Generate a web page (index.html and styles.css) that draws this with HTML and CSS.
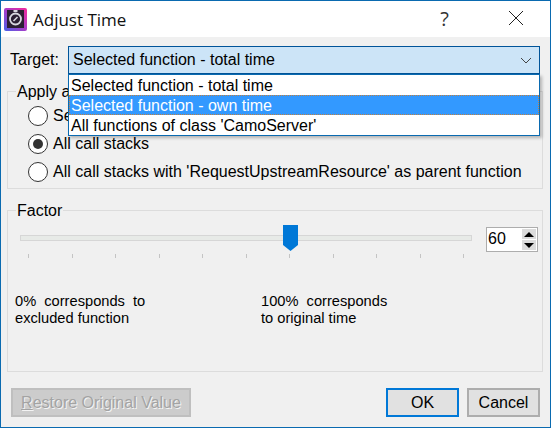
FILE: index.html
```html
<!DOCTYPE html>
<html lang="en">
<head>
<meta charset="UTF-8" />
<title>Adjust Time</title>
<meta name="viewport" content="width=device-width, initial-scale=1" />
<link rel="stylesheet" href="styles.css">
</head>
<body>

<div class="window">
  <div class="titlebar">
    <svg class="app-icon" width="23" height="24" viewBox="0 0 23 24">
      <defs>
        <linearGradient id="iconBg" x1="0" y1="1" x2="1" y2="0">
          <stop offset="0" stop-color="#4a62e8" />
          <stop offset="0.5" stop-color="#a83cc8" />
          <stop offset="1" stop-color="#f4289a" />
        </linearGradient>
      </defs>
      <rect x="0" y="1" width="23" height="23" rx="2" fill="url(#iconBg)" />
      <rect x="3" y="3" width="17" height="18" fill="#2a1f33" />
      <rect x="9.5" y="3" width="4" height="2" fill="#d8d8e0" />
      <circle cx="11.5" cy="12" r="5.5" fill="none" stroke="#d8d8e0" stroke-width="1.8" />
      <path d="M9.5 14 L13.5 10" stroke="#d8d8e0" stroke-width="1.6" />
    </svg>
    <span class="title">Adjust Time</span>
    <span class="help">?</span>
    <svg class="close" width="16" height="16" viewBox="0 0 16 16">
      <path d="M1 1 L15 15 M15 1 L1 15" stroke="#222" stroke-width="1" fill="none" />
    </svg>
  </div>

  <div class="content">
    <div class="target-row">
      <label class="target-label">Target:</label>
      <div class="combo-wrap">
        <div class="combo">
          <span>Selected function - total time</span>
          <svg width="12" height="7" viewBox="0 0 12 7">
            <path d="M1 1 L6 6 L11 1" stroke="#444" stroke-width="1" fill="none" />
          </svg>
        </div>
        <ul class="combo-list">
          <li>Selected function - total time</li>
          <li class="selected">Selected function - own time</li>
          <li>All functions of class 'CamoServer'</li>
        </ul>
      </div>
    </div>

    <fieldset class="group group-apply">
      <legend>Apply a</legend>
      <div class="radio-row"><span class="radio"></span>Se</div>
      <div class="radio-row"><span class="radio checked"></span>All call stacks</div>
      <div class="radio-row"><span class="radio"></span>All call stacks with 'RequestUpstreamResource' as parent function</div>
    </fieldset>

    <fieldset class="group group-factor">
      <legend>Factor</legend>
      <div class="slider-row">
        <div class="slider">
          <div class="track"></div>
          <svg class="thumb" width="15" height="26" viewBox="0 0 15 26">
            <polygon points="0,0 15,0 15,20 7.5,26 0,20" fill="#0078d7" />
          </svg>
          <div class="ticks">
            <i></i><i></i><i></i><i></i><i></i><i></i><i></i><i></i><i></i><i></i><i></i>
          </div>
        </div>
        <div class="spin">
          <span class="spin-value">60</span>
          <div class="spin-buttons">
            <span class="spin-btn"><b class="arrow-up"></b></span>
            <span class="spin-btn"><b class="arrow-down"></b></span>
          </div>
        </div>
      </div>
      <div class="factor-notes">
        <p class="note"><span class="wide">0% corresponds to</span><br>excluded function</p>
        <p class="note"><span class="wide">100% corresponds</span><br>to original time</p>
      </div>
    </fieldset>

    <div class="footer">
      <button class="btn btn-restore" disabled><u>R</u>estore Original Value</button>
      <span class="spacer"></span>
      <button class="btn btn-ok">OK</button>
      <button class="btn btn-cancel">Cancel</button>
    </div>
  </div>
</div>

</body>
</html>
```

FILE: styles.css
```css
* { box-sizing: border-box; }
html, body { margin: 0; height: 100%; }
body { font-family: "Liberation Sans", Arial, sans-serif; font-size: 16px; color: #000; background: #f0f0f0; overflow: hidden; }

.window { height: 428px; border: 1px solid #0a6ab0; display: flex; flex-direction: column; background: #f0f0f0; }

.titlebar { height: 36px; background: #fff; display: flex; align-items: center; padding-left: 3px; flex: none; }
.app-icon { flex: none; margin-top: -1px; }
.title { font-family: "Open Sans", sans-serif; font-size: 17px; margin-left: 6px; color: #111; flex: 1; }
.help { font-family: "Open Sans", sans-serif; font-size: 20px; color: #333; margin-right: 59px; margin-top: -1px; }
.close { margin-right: 26px; margin-top: -2px; }

.content { flex: 1; display: flex; flex-direction: column; padding: 9px 7px 9px 6px; }

.target-row { display: flex; align-items: center; height: 28px; flex: none; }
.target-label { width: 61px; padding-left: 3px; }
.combo-wrap { position: relative; width: 472px; }
.combo { height: 28px; background: #cce4f7; border: 1px solid #005499; display: flex; align-items: center; justify-content: space-between; padding: 0 7px 0 4px; }
.combo-list { position: absolute; z-index: 5; top: 28px; left: 0; right: 0; margin: 0; padding: 0; list-style: none; background: #fff; border: 1px solid #0a6ab0; box-shadow: 2px 2px 3px rgba(0,0,0,0.25); }
.combo-list li { height: 20px; line-height: 22px; padding-left: 2px; }
.combo-list li.selected { background: #3399ff; color: #fff; outline: 1px dotted #c08040; outline-offset: -1px; }

.group { margin: 0; padding: 0; border: 1px solid #dcdcdc; min-width: 0; }
.group legend { margin-left: 8px; padding: 0 1px; line-height: 17px; }

.group-apply { height: 106px; margin-top: 9px; padding: 1px 0 0 0; }
.radio-row { display: flex; align-items: center; height: 28px; padding-left: 20px; }
.radio-row:first-of-type { height: 29px; }
.radio { width: 20px; height: 20px; border: 1px solid #333; border-radius: 50%; background: #fff; margin-right: 5px; flex: none; display: flex; align-items: center; justify-content: center; }
.radio.checked::after { content: ""; width: 10px; height: 10px; border-radius: 50%; background: #333; }

.group-factor { height: 170px; margin-top: 13px; padding: 0; }

.slider-row { display: flex; padding: 0 0 0 12px; }
.slider { position: relative; width: 452px; height: 40px; }
.track { position: absolute; top: 16px; left: 0; right: 0; height: 6px; background: #e7eae7; border: 1px solid #d6d6d6; }
.thumb { position: absolute; left: 263px; top: 6px; }
.ticks { position: absolute; top: 35px; left: 8px; right: 8px; display: flex; justify-content: space-between; }
.ticks i { width: 1px; height: 4px; background: #c4c4c4; }

.spin { margin: 8px 0 0 14px; width: 52px; height: 25px; background: #fff; border: 1px solid #adadad; display: flex; align-items: center; justify-content: space-between; padding: 0 1px; font-size: 16px; line-height: 20px; }
.spin-value { margin-top: -2px; }
.spin-buttons { display: flex; flex-direction: column; gap: 1px; }
.spin-btn { width: 14px; height: 10px; background: #dcdcdc; display: flex; align-items: center; justify-content: center; }
.arrow-up { border: 5px solid transparent; border-top: 0; border-bottom: 5px solid #000; width: 0; height: 0; }
.arrow-down { border: 5px solid transparent; border-bottom: 0; border-top: 5px solid #000; width: 0; height: 0; }

.factor-notes { display: flex; padding: 34px 0 0 7px; }
.note { margin: 0; line-height: 17px; width: 246px; font-size: 14.67px; }
.note .wide { word-spacing: 4px; }

.footer { display: flex; margin-top: 16px; padding: 0 3px 0 4px; flex: none; height: 29px; gap: 8px; }
.spacer { flex: 1; }
.btn { font-family: "Liberation Sans", Arial, sans-serif; font-size: 16px; padding: 0; height: 29px; width: 73px; background: #e1e1e1; border: 2px solid #adadad; color: #000; }
.btn-ok { border-color: #0078d7; }
.btn-restore { width: 180px; background: #ccc; border-color: #bfbfbf; color: #a3a3a3; text-shadow: 1px 1px 0 #f4f4f4; }
```
